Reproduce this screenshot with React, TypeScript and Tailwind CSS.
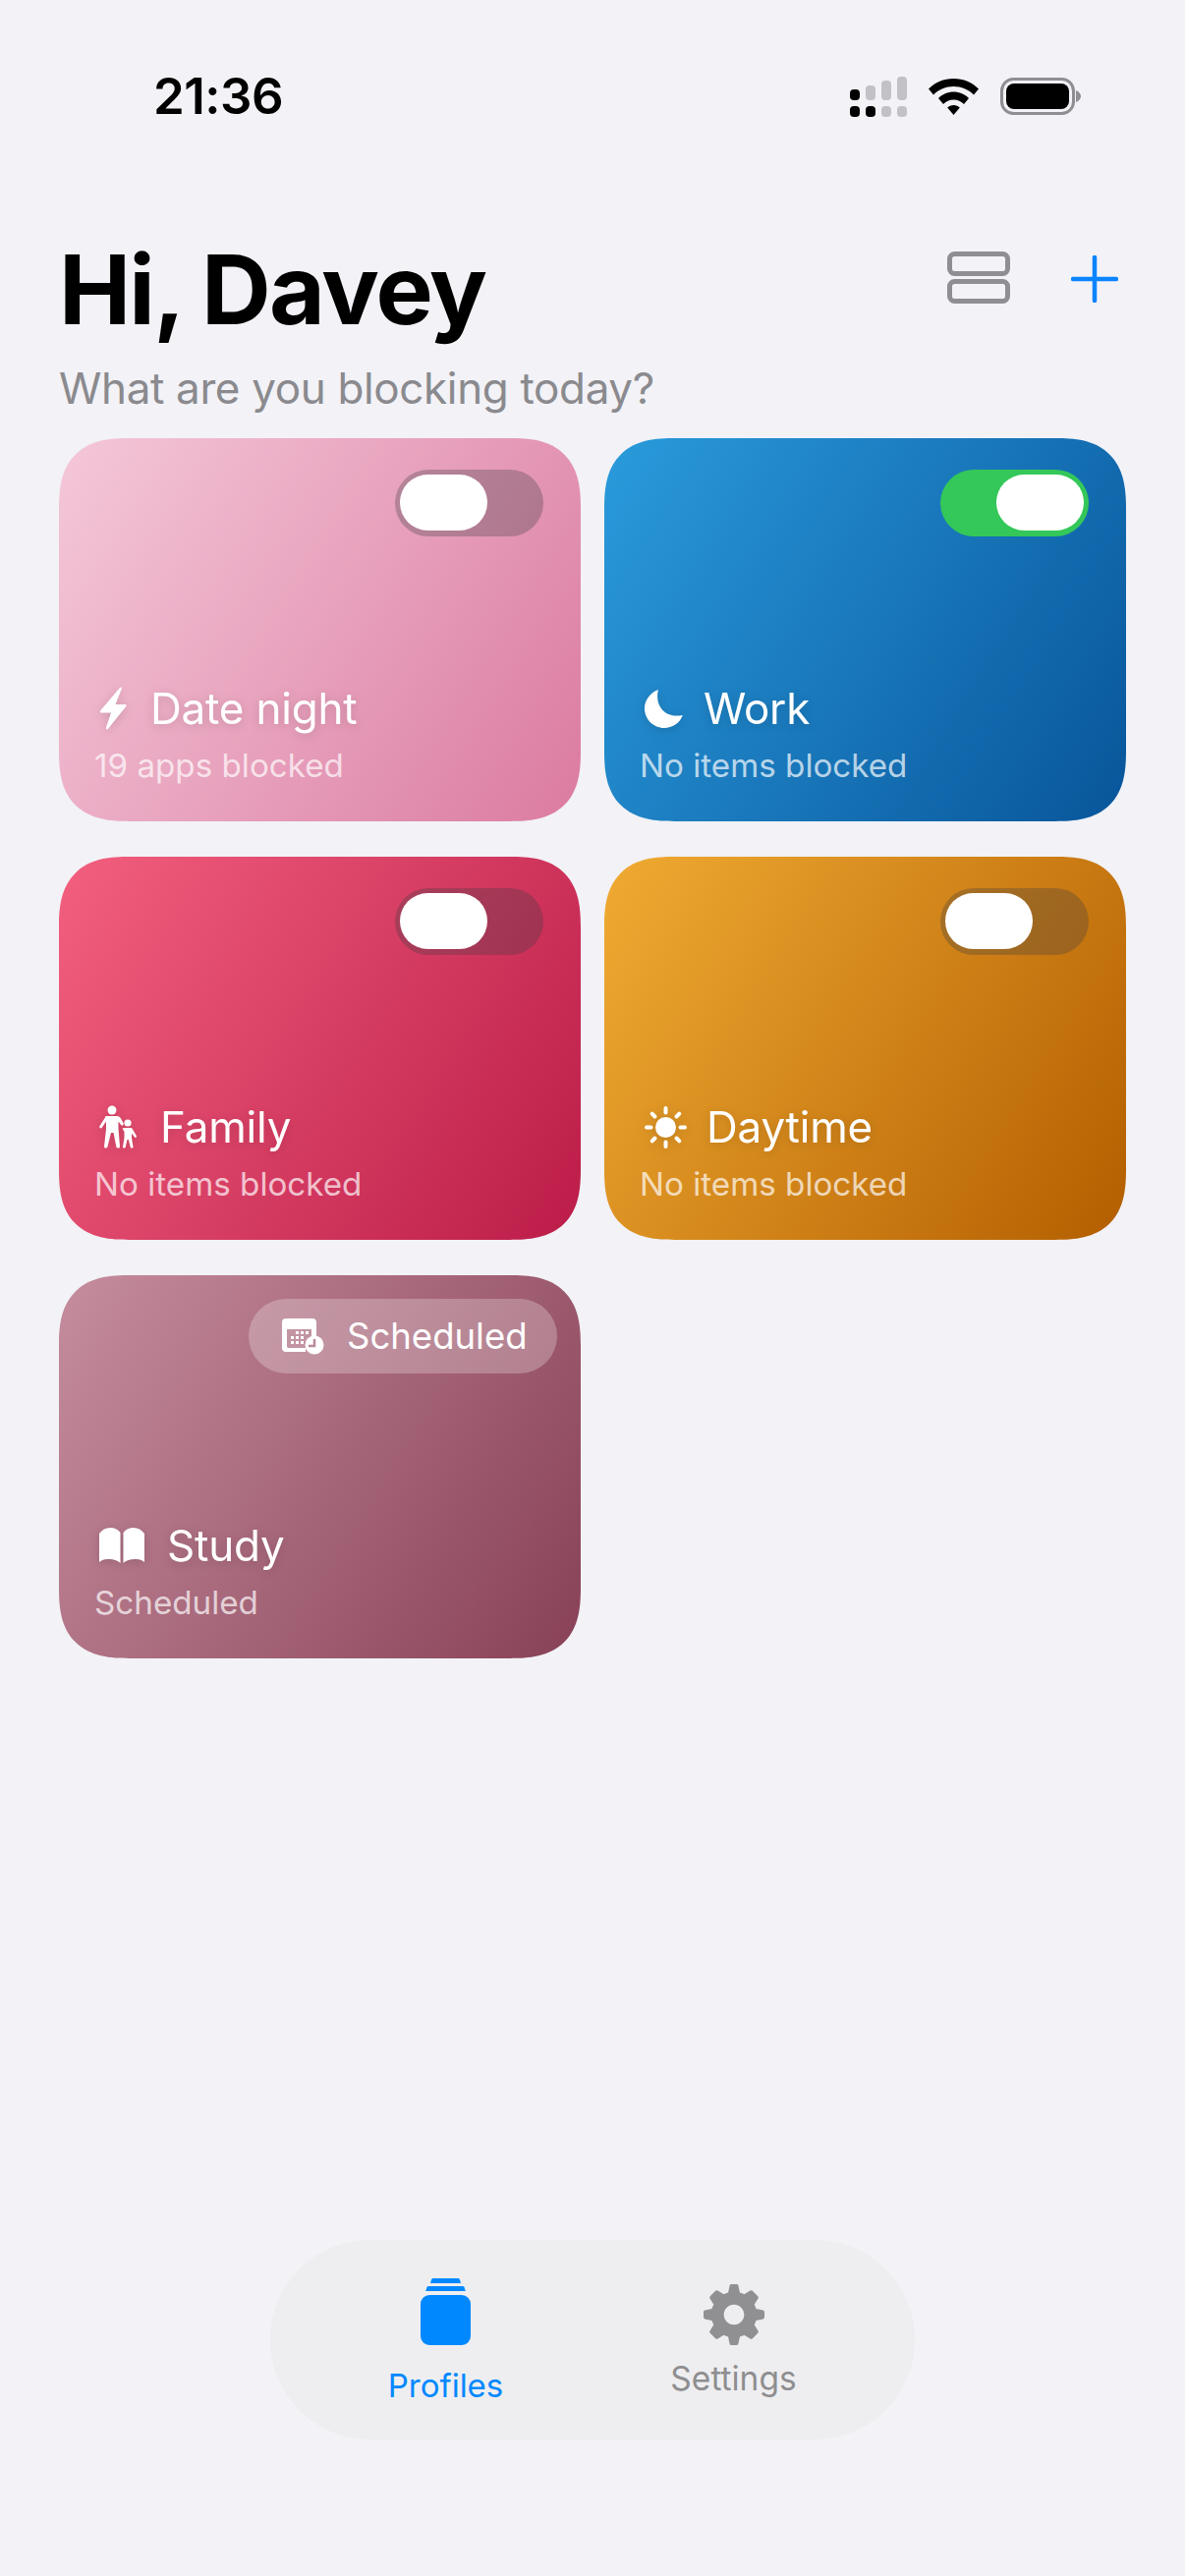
import type { ReactNode } from "react";

function SignalIcon() {
  return (
    <svg width="58" height="41" viewBox="0 0 58 41" className="shrink-0">
      <rect x="0" y="13" width="10" height="11" rx="4" fill="#000" />
      <rect x="16" y="9" width="10" height="15" rx="4" fill="#c1c1c6" />
      <rect x="32" y="4" width="10" height="20" rx="4" fill="#c1c1c6" />
      <rect x="48" y="0" width="10" height="24" rx="4" fill="#c1c1c6" />
      <rect x="0" y="30" width="10" height="11" rx="4" fill="#000" />
      <rect x="16" y="30" width="10" height="11" rx="4" fill="#000" />
      <rect x="32" y="30" width="10" height="11" rx="4" fill="#c1c1c6" />
      <rect x="48" y="30" width="10" height="11" rx="4" fill="#c1c1c6" />
    </svg>
  );
}

function WifiIcon() {
  return (
    <svg width="51" height="37" viewBox="0 0 51 37" className="shrink-0">
      <path d="M25.5 0C35.5 0 44.5 4 51 10.5L46 16.5C40.5 11 33.5 8 25.5 8S10.5 11 5 16.5L0 10.5C6.500 4 15.500 0 25.500 0Z" fill="#000" />
      <path d="M25.500 13.500C31.500 13.500 37 16 41 20L36 26C33.500 23.300 29.700 21.500 25.500 21.500S17.500 23.300 15 26L10 20C14 16 19.500 13.500 25.500 13.500Z" fill="#000" />
      <path d="M25.500 27C28 27 30.200 28 31.800 29.500L25.500 37L19.200 29.500C20.800 28 23 27 25.500 27Z" fill="#000" />
    </svg>
  );
}

function BatteryIcon() {
  return (
    <svg width="82" height="38" viewBox="0 0 82 38" className="shrink-0">
      <rect x="1.500" y="1.500" width="73" height="35" rx="12" fill="none" stroke="#8e8e93" strokeWidth="3" />
      <rect x="6" y="6" width="64" height="26" rx="8" fill="#000" />
      <path d="M77 13C80 14 82 16.500 82 19S80 24 77 25Z" fill="#8e8e93" />
    </svg>
  );
}

function BoltIcon() {
  return (
    <svg width="28" height="44" viewBox="0 0 28 44" className="shrink-0">
      <path d="M21 1L1 24.500C.3 25.500.8 26.500 2 26.500H12L7 41.500C6.600 43.300 8 44 9 42.800L27.300 20C28 19 27.500 18 26.500 18H16.500L22.800 2C23.300.500 22 0 21 1Z" fill="#fff" />
    </svg>
  );
}

function MoonIcon() {
  return (
    <svg width="39" height="39" viewBox="0 0 39 39" className="shrink-0">
      <path d="M14 0C10.500 12 17 30 38.800 26C36 34 28 39 20 39C9 39 0 30 0 19C0 10.500 6 3 14 0Z" fill="#fff" />
    </svg>
  );
}

function FamilyIcon() {
  return (
    <svg width="38" height="44" viewBox="0 0 38 44" className="shrink-0">
      <circle cx="13" cy="5" r="4.500" fill="#fff" />
      <path d="M7 11H18C20 11 21 12 22 13.500L25 19L23 21L19.500 16.500V24L21 42C21 44 17.500 44 17.300 42L14.500 28H12L8.500 42C8 44 5 44 5 42L7 24V16.500L2.500 23C1.500 24 -.5 23 .5 21L6 12.500C6 11.500 6.500 11 7 11Z" fill="#fff" />
      <circle cx="29" cy="18" r="3.600" fill="#fff" />
      <path d="M25.500 23H32C33 23 33.500 23.500 34 24.500L37.800 31C38.500 32.500 36.700 33.500 35.800 32.300L33 28.500V33L34.500 42.500C34.500 44 32 44 31.700 42.500L29.800 35H28.500L26.800 42.500C26.500 44 24 44 24 42.500L25.500 33V27L23.500 23.500Z" fill="#fff" />
    </svg>
  );
}

function SunIcon() {
  return (
    <svg width="43" height="43" viewBox="0 0 43 43" className="shrink-0">
      <circle cx="21.500" cy="21.500" r="10.500" fill="#fff" />
      <g stroke="#fff" strokeWidth="4" strokeLinecap="round">
        <path d="M21.500 2V6.500" />
        <path d="M21.500 36.500V41" />
        <path d="M2 21.500H6.500" />
        <path d="M36.500 21.500H41" />
        <path d="M7.700 7.700L10.500 10.500" />
        <path d="M32.500 32.500L35.300 35.300" />
        <path d="M7.700 35.300L10.500 32.500" />
        <path d="M32.500 10.500L35.300 7.700" />
      </g>
    </svg>
  );
}

function BookIcon() {
  return (
    <svg width="46" height="36" viewBox="0 0 46 36" className="shrink-0">
      <path d="M21.500 5V36C18 32.500 13 32 8 32C5 32 2.500 33 0 35V6C3 2 6.500 0 11 0C15.500 0 19 1.500 21.500 5Z" fill="#fff" />
      <path d="M24.500 5V36C28 32.500 33 32 38 32C41 32 43.500 33 46 35V6C43 2 39.500 0 35 0C30.500 0 27 1.500 24.500 5Z" fill="#fff" />
    </svg>
  );
}

function CalendarClockIcon() {
  return (
    <svg width="43" height="37" viewBox="0 0 43 37" className="shrink-0">
      <path d="M4 0H31C33.500 0 35 1.500 35 4V18H30V11H5V28C5 29.500 5.500 30 7 30H24V34H4C1.500 34 0 32.500 0 30V4C0 1.500 1.500 0 4 0Z" fill="#fff" />
      <g fill="#fff">
        <rect x="14" y="13" width="3" height="3" />
        <rect x="19" y="13" width="3" height="3" />
        <rect x="24" y="13" width="3" height="3" />
        <rect x="9" y="18" width="3" height="3" />
        <rect x="14" y="18" width="3" height="3" />
        <rect x="19" y="18" width="3" height="3" />
        <rect x="9" y="23" width="3" height="3" />
        <rect x="14" y="23" width="3" height="3" />
        <rect x="19" y="23" width="3" height="3" />
      </g>
      <circle cx="33" cy="27" r="9.500" fill="#fff" />
      <path d="M33 21V28H27" fill="none" stroke="#b98996" strokeWidth="2.500" />
    </svg>
  );
}

function ToggleSwitch({ on }: { on: boolean }) {
  return (
    <div
      className={`flex h-[68px] w-[151px] rounded-full p-[5px] ${
        on ? "justify-end bg-[#34c759]" : "justify-start bg-[#3c3c43]/30"
      }`}
    >
      <div className="h-[57px] w-[89px] rounded-full bg-white" />
    </div>
  );
}

type CardProps = {
  title: string;
  subtitle: string;
  icon: ReactNode;
  gradient: string;
  gap: string;
  on?: boolean;
  scheduled?: boolean;
};

function ProfileCard({ title, subtitle, icon, gradient, gap, on, scheduled }: CardProps) {
  return (
    <div className={`flex h-[390px] flex-col rounded-[72px] bg-linear-[122deg] px-9 [corner-shape:superellipse(1.4)] ${gradient}`}>
      {scheduled ? (
        <div className="mt-6 -mr-3 flex h-[76px] w-[314px] items-center gap-[23px] self-end rounded-full bg-white/25 pl-[34px]">
          <CalendarClockIcon />
          <span className="text-[36.500px] font-normal text-white">Scheduled</span>
        </div>
      ) : (
        <div className="mt-8 mr-[2px] self-end">
          <ToggleSwitch on={!!on} />
        </div>
      )}
      <div className="mt-auto pb-9">
        <div className={`flex h-[54px] items-center pl-[5px] [filter:drop-shadow(0_2px_5px_rgba(0,0,0,0.14))] ${gap}`}>
          {icon}
          <span className="text-[44px] leading-[54px] tracking-[-0.2px] text-white">{title}</span>
        </div>
        <div className="mt-[10px] text-[33.2px] leading-[42px] text-white/70">{subtitle}</div>
      </div>
    </div>
  );
}

export default function App() {
  return (
    <div className="flex h-[2622px] w-[1206px] flex-col overflow-hidden bg-[#f2f2f7] font-['Inter',sans-serif]">
      {/* STATUS BAR */}
      <div className="flex items-center justify-between pt-[67px] pl-[156px] pr-[106px]">
        <span className="text-[51px] leading-[62px] font-semibold tracking-[-0.5px] text-black">21:36</span>
        <div className="flex items-center gap-[22px]">
          <SignalIcon />
          <WifiIcon />
          <BatteryIcon />
        </div>
      </div>

      {/* HEADER */}
      <div className="mt-[107px] flex items-start justify-between px-[60px]">
        <div>
          <h1 className="text-[98px] leading-[118px] font-bold tracking-[-1.9px] text-black">Hi, Davey</h1>
          <p className="mt-[14px] text-[44px] leading-[54px] tracking-[-0.36px] text-[#8a8a8e]">What are you blocking today?</p>
        </div>
        <div className="mt-5 flex items-start gap-[62px] pr-[8px]">
          <svg width="64" height="53" viewBox="0 0 64 53" fill="none" stroke="#8e8e93" strokeWidth="5">
            <rect x="2.500" y="2.500" width="59" height="20" rx="5" />
            <rect x="2.500" y="30.500" width="59" height="20" rx="5" />
          </svg>
          <svg width="48" height="48" viewBox="0 0 48 48" className="mt-1" stroke="#0a84ff" strokeWidth="4.500" strokeLinecap="round">
            <path d="M24 2V46" />
            <path d="M2 24H46" />
          </svg>
        </div>
      </div>

      {/* PROFILES */}
      <div className="mt-6 grid grid-cols-2 gap-x-6 gap-y-9 px-[60px]">
        <ProfileCard
          title="Date night"
          subtitle="19 apps blocked"
          icon={<BoltIcon />}
          gap="gap-6"
          gradient="from-[#f4c8d9] to-[#db7ba0]"
        />
        <ProfileCard
          title="Work"
          subtitle="No items blocked"
          icon={<MoonIcon />}
          gap="gap-[21px]"
          on
          gradient="from-[#2a9bdc] to-[#08559a]"
        />
        <ProfileCard
          title="Family"
          subtitle="No items blocked"
          icon={<FamilyIcon />}
          gap="gap-6"
          gradient="from-[#f3607f] to-[#bb1c48]"
        />
        <ProfileCard
          title="Daytime"
          subtitle="No items blocked"
          icon={<SunIcon />}
          gap="gap-5"
          gradient="from-[#f0ab33] to-[#b35e00]"
        />
        <ProfileCard
          title="Study"
          subtitle="Scheduled"
          icon={<BookIcon />}
          gap="gap-[23px]"
          scheduled
          gradient="from-[#c58d9e] to-[#884156]"
        />
      </div>

      {/* TAB BAR */}
      <div className="mt-auto mb-[139px] flex h-[203px] w-[656px] self-center rounded-[102px] bg-[#eeeef0] pl-8">
        <div className="flex w-[293px] flex-col items-center pt-[39px]">
          <svg width="51" height="68" viewBox="0 0 51 68" fill="#0088ff">
            <path d="M13 0H38C39 0 39.500 .5 40 1.500L41 5H10L11 1.500C11.500 .5 12 0 13 0Z" />
            <path d="M8 8H43C44 8 45 9 45 11L46 13H5L6 11C6 9 7 8 8 8Z" />
            <rect x="0" y="17" width="51" height="51" rx="9" />
          </svg>
          <span className="mt-[22px] text-[33px] leading-[38px] text-[#0088ff]">Profiles</span>
        </div>
        <div className="flex w-[293px] flex-col items-center pt-[45px]">
          <svg width="62" height="62" viewBox="0 0 24 24" fill="#909092">
            <path fillRule="evenodd" d="M10.300 0.500C10.400 0.200 10.700 0 11 0H13C13.300 0 13.600 0.200 13.700 0.500L14.300 3.300C14.900 3.500 15.500 3.700 16 4L18.400 2.500C18.700 2.300 19 2.400 19.300 2.600L21.400 4.700C21.600 5 21.700 5.300 21.500 5.600L20 8C20.300 8.500 20.500 9.100 20.700 9.700L23.500 10.300C23.800 10.400 24 10.700 24 11V13C24 13.300 23.800 13.600 23.500 13.700L20.700 14.300C20.500 14.900 20.300 15.500 20 16L21.500 18.400C21.700 18.700 21.600 19 21.400 19.300L19.300 21.400C19 21.600 18.700 21.700 18.400 21.500L16 20C15.500 20.300 14.900 20.500 14.300 20.700L13.700 23.500C13.600 23.800 13.300 24 13 24H11C10.700 24 10.400 23.800 10.300 23.500L9.700 20.700C9.100 20.500 8.500 20.300 8 20L5.600 21.500C5.300 21.700 5 21.600 4.700 21.400L2.600 19.300C2.400 19 2.300 18.700 2.500 18.400L4 16C3.700 15.500 3.500 14.900 3.300 14.300L0.500 13.700C0.200 13.600 0 13.300 0 13V11C0 10.700 0.200 10.400 0.500 10.300L3.300 9.700C3.500 9.100 3.700 8.500 4 8L2.500 5.600C2.300 5.300 2.400 5 2.600 4.700L4.700 2.600C5 2.400 5.300 2.300 5.600 2.500L8 4C8.500 3.700 9.100 3.500 9.700 3.300ZM12 8C9.800 8 8 9.800 8 12S9.800 16 12 16S16 14.200 16 12S14.200 8 12 8Z" />
          </svg>
          <span className="mt-[15px] text-[33.500px] leading-[38px] text-[#8e8e90]">Settings</span>
        </div>
      </div>
    </div>
  );
}
